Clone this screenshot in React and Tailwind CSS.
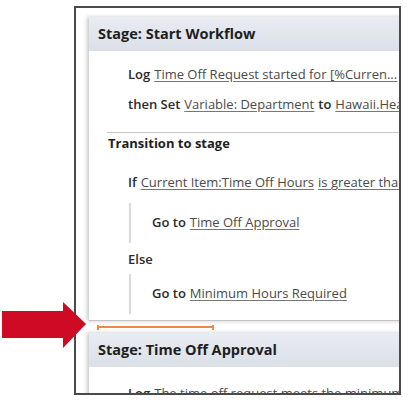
import React from 'react';

const Link = ({ children }) => (
  <span className="text-[#4a4a4a] underline decoration-[#777] underline-offset-2">{children}</span>
);

const Plain = ({ children }) => <span className="font-semibold text-[#2b2b2b]">{children}</span>;

const Row = ({ children, className = '' }) => (
  <div className={`flex h-[30px] items-center whitespace-nowrap pl-[39px] ${className}`}>{children}</div>
);

const Branch = ({ children }) => (
  <div className="ml-[40px] flex h-[40px] items-center border-l-2 border-[#d6d9e3] pl-[21px] whitespace-nowrap">
    {children}
  </div>
);

const StageHeader = ({ title }) => (
  <div className="flex h-[34px] items-center bg-gradient-to-b from-[#e9ecf1] to-[#dbe0e8] pl-[9px] text-[14.5px] font-bold text-[#1e1e1e]">
    {title}
  </div>
);

const RedArrow = () => (
  <svg className="absolute left-0 top-[301px]" width="88" height="48" viewBox="0 0 88 48">
    <polygon points="2,10 63,10 63,1 86,23 63,47 63,37 2,37" fill="#cf0a24" />
  </svg>
);

export default function App() {
  return (
    <div
      className="relative h-[400px] w-[408px] overflow-hidden bg-white text-[13px]"
      style={{ fontFamily: '"Open Sans", "Liberation Sans", sans-serif' }}
    >
      <RedArrow />
      <div className="ml-[74px] mt-[6px] h-[389px] w-[327px] overflow-hidden border-2 border-[#4a4a4a] bg-white pl-[13px] pt-[9px]">
        {/* stage 1 */}
        <div className="w-[360px] border-b border-[#c4c4c4] bg-white shadow-[-2px_0_4px_rgba(0,0,0,0.22)]">
          <StageHeader title="Stage: Start Workflow" />
          <div className="pt-[9px] pb-[6px]">
            <Row>
              <Plain>Log</Plain>
              <span className="ml-[4px]">
                <Link>Time Off Request started for [%Curren...</Link>
              </span>
            </Row>
            <Row>
              <Plain>then Set</Plain>
              <span className="ml-[4px]">
                <Link>Variable: Department</Link>
              </span>
              <span className="ml-[4px]">
                <Plain>to</Plain>
              </span>
              <span className="ml-[4px]">
                <Link>Hawaii.Health</Link>
              </span>
            </Row>
            <div className="ml-[18px] mt-[12px] border-t border-[#c8c8c8]" />
            <div className="flex h-[22px] items-center pl-[19px] font-bold text-[#1e1e1e]">Transition to stage</div>
            <Row className="mt-[13px]">
              <Plain>If</Plain>
              <span className="ml-[4px]">
                <Link>Current Item:Time Off Hours</Link>
              </span>
              <span className="ml-[4px]">
                <Link>is greater than</Link>
              </span>
            </Row>
            <div className="mt-[5px]">
              <Branch>
                <Plain>Go to</Plain>
                <span className="ml-[4px]">
                  <Link>Time Off Approval</Link>
                </span>
              </Branch>
            </div>
            <Row className="mt-[2px]">
              <Plain>Else</Plain>
            </Row>
            <div className="-mt-[1px]">
              <Branch>
                <Plain>Go to</Plain>
                <span className="ml-[4px]">
                  <Link>Minimum Hours Required</Link>
                </span>
              </Branch>
            </div>
          </div>
        </div>
        {/* drop marker */}
        <div className="flex h-[12px] items-center pl-[8px]">
          <div className="h-[5px] w-[117px] border-x-2 border-[#f08a3e] py-[1.5px]">
            <div className="h-[2px] bg-[#f08a3e]" />
          </div>
        </div>
        {/* stage 2 */}
        <div className="w-[360px] bg-white shadow-[-2px_0_4px_rgba(0,0,0,0.22)]">
          <StageHeader title="Stage: Time Off Approval" />
          <div className="pt-[12px]">
            <Row>
              <Plain>Log</Plain>
              <span className="ml-[4px]">
                <Link>The time off request meets the minimum...</Link>
              </span>
            </Row>
          </div>
        </div>
      </div>
    </div>
  );
}
